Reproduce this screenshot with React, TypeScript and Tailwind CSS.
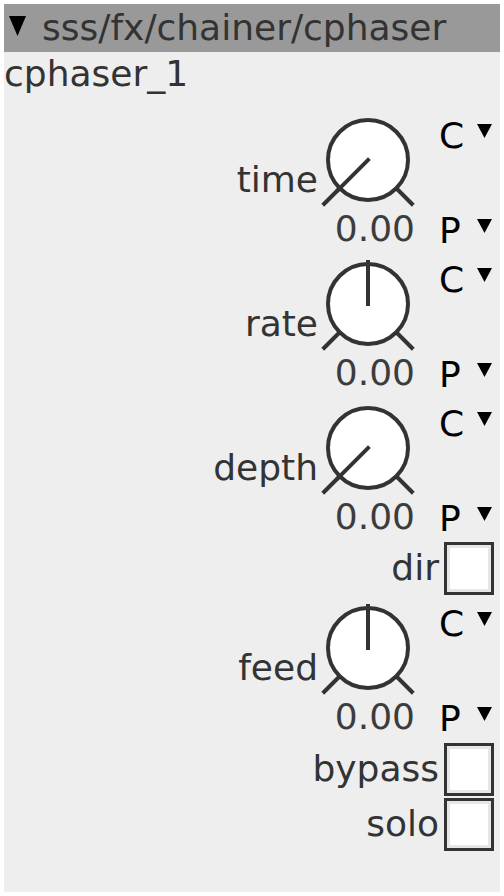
import React from "react";

const Tri = ({ w, h }: { w: number; h: number }) => (
  <svg width={w} height={h} viewBox={`0 0 ${w} ${h}`} className="block">
    <polygon points={`0,0 ${w},0 ${w / 2},${h}`} fill="#000" />
  </svg>
);

const Knob = ({ mid }: { mid: boolean }) => {
  const c = 48;
  const d = 0.7071;
  return (
    <svg width={96} height={96} viewBox="0 0 96 96" className="block">
      <circle cx={c} cy={c} r={40} fill="#fff" stroke="#333" strokeWidth={4} />
      <line x1={c - 40 * d} y1={c + 40 * d} x2={c - 64 * d} y2={c + 64 * d} stroke="#333" strokeWidth={4} />
      <line x1={c + 40 * d} y1={c + 40 * d} x2={c + 64 * d} y2={c + 64 * d} stroke="#333" strokeWidth={4} />
      {mid ? (
        <line x1={c} y1={c + 2} x2={c} y2={c - 44} stroke="#333" strokeWidth={4} />
      ) : (
        <line x1={c + 2 * d} y1={c - 2 * d} x2={c - 44 * d} y2={c + 44 * d} stroke="#333" strokeWidth={4} />
      )}
    </svg>
  );
};

const KnobBlock = ({ label, mid }: { label: string; mid: boolean }) => (
  <div className="flex h-[144px] justify-end">
    <div className="pr-[2px] pt-[50px] text-[36px] leading-[36px] text-[#333]">{label}</div>
    <div className="flex w-[96px] flex-col items-end">
      <Knob mid={mid} />
      <div className="mt-[3px] pr-[1px] text-[36px] leading-[36px] text-[#3c3c3c]">0.00</div>
    </div>
    <div className="ml-[23px] flex w-[61px] flex-col justify-between pb-[7px] pt-[6px] text-black">
      <div className="flex items-start text-[36px] leading-[36px]">
        <span className="w-[38px]">C</span>
        <span className="mt-[6px]">
          <Tri w={15} h={14} />
        </span>
      </div>
      <div className="flex items-start text-[36px] leading-[36px]">
        <span className="w-[38px]">P</span>
        <span className="mt-[6px]">
          <Tri w={15} h={14} />
        </span>
      </div>
    </div>
  </div>
);

const Check = () => (
  <div className="h-[53px] w-[50px] border-[3px] border-[#333] bg-white shadow-[inset_0_0_0_3px_#e6e6e6]" />
);

const CheckRow = ({ label, extra }: { label: string; extra: string }) => (
  <div className={`flex h-[56px] items-center justify-end pr-[6px] ${extra}`}>
    <span className="mr-[5px] text-[36px] leading-[36px] text-[#333]">{label}</span>
    <Check />
  </div>
);

export default function App() {
  return (
    <div className="min-h-[896px] w-[504px] bg-white pl-[4px] pt-[4px] font-['DejaVu_Sans',sans-serif]">
      <div className="flex h-[888px] w-[496px] flex-col bg-[#eeeeee]">
        <div className="flex h-[48px] items-center bg-[#999999] pl-[5px] text-[36px] leading-[36px] text-[#333]">
          <span className="mr-[16px] mt-[-4px]">
            <Tri w={17} h={20} />
          </span>
          <span>sss/fx/chainer/cphaser</span>
        </div>
        <div className="h-[60px] pt-[4px] text-[36px] leading-[36px] text-[#333]">cphaser_1</div>
        <KnobBlock label="time" mid={false} />
        <KnobBlock label="rate" mid={true} />
        <KnobBlock label="depth" mid={false} />
        <CheckRow label="dir" extra="-mt-[4px] mb-[4px]" />
        <KnobBlock label="feed" mid={true} />
        <CheckRow label="bypass" extra="-mt-[3px]" />
        <CheckRow label="solo" extra="-mt-[1px]" />
      </div>
    </div>
  );
}
